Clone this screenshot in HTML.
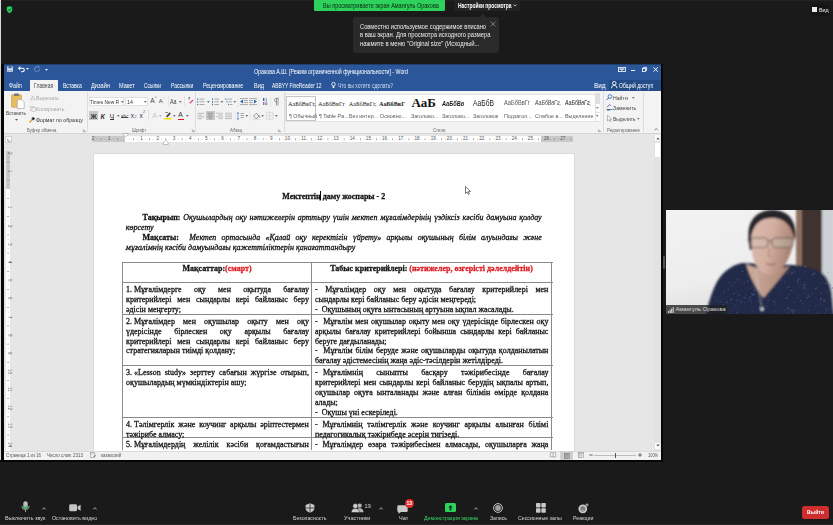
<!DOCTYPE html>
<html><head><meta charset="utf-8">
<style>
*{margin:0;padding:0;box-sizing:border-box}
html,body{width:833px;height:525px;overflow:hidden;background:#1a1a1a;font-family:"Liberation Sans",sans-serif}
.a{position:absolute}
.t{position:absolute;white-space:nowrap;line-height:1}
.sx{transform-origin:0 0}
svg{position:absolute;overflow:visible}
/* zoom top */
.tab{position:absolute;top:82.6px;font-size:6.3px;color:#fff;white-space:nowrap;line-height:1;transform-origin:0 0}
.rb{position:absolute;white-space:nowrap;line-height:1;font-size:5.9px;color:#444;transform-origin:0 0}
.gl{position:absolute;white-space:nowrap;line-height:1;font-size:5.4px;color:#666;transform-origin:0 0}
.sep{position:absolute;width:1px;background:#dcdcdc}
.doc{position:absolute;font-family:"Liberation Serif",serif;font-size:8.0px;line-height:9.9px;height:9.9px;color:#141414;white-space:nowrap;-webkit-text-stroke-width:0.28px;transform:scaleY(1.12);transform-origin:0 7.5px}
.j{text-align:justify;text-align-last:justify}
.c1{left:126px;width:182.9px}
.c2{left:315px;width:233.4px}
.hl{position:absolute;height:1px;background:#8a8a8a}
.vl{position:absolute;width:1px;background:#8a8a8a}
.red{color:#dc1f26}
.tb{position:absolute;white-space:nowrap;line-height:1;font-size:5.8px;color:#d8d8d8;transform-origin:0 0}
</style></head><body>
<!-- zoom top area -->
<div class="a" style="left:0;top:0;width:833px;height:1px;background:#222"></div>
<div class="a" style="left:0;top:0;width:1px;height:460px;background:#d8d8d8"></div>
<svg style="left:5.4px;top:5px" width="9" height="9" viewBox="0 0 9 9"><path d="M4.5 0.8 L7.6 2.1 L7.6 4.6 C7.6 6.5 6.2 7.7 4.5 8.4 C2.8 7.7 1.4 6.5 1.4 4.6 L1.4 2.1 Z" fill="#2fd15d" stroke="#0b0b14" stroke-width="0.6"/><path d="M3.2 4.7 L4.3 5.6 L6 3.6" stroke="#0d3a18" stroke-width="0.9" fill="none"/></svg>

<div class="a" style="left:314px;top:0;width:131px;height:11px;background:#2fd15d;border-radius:0 0 1.5px 1.5px"></div>
<div class="t sx" style="left:323px;top:2.8px;font-size:6.3px;color:#082811;transform:scaleX(0.874)">Вы просматриваете экран Амангуль Оракова</div>
<div class="a" style="left:454px;top:0;width:66px;height:10.5px;background:#232323;border-radius:0 0 2px 2px"></div>
<div class="t sx" style="left:457.6px;top:2.8px;font-size:6.3px;color:#fff;font-weight:bold;transform:scaleX(0.78)">Настройки просмотра</div>
<svg style="left:513.2px;top:4.3px" width="4" height="3" viewBox="0 0 4 3"><path d="M0.5 0.6 L2 2 L3.5 0.6" stroke="#ddd" stroke-width="0.8" fill="none"/></svg>

<div class="a" style="left:353px;top:16.8px;width:146px;height:36px;background:#2a2a2b;border-radius:3px"></div>
<svg style="left:479px;top:13.5px" width="8" height="4" viewBox="0 0 8 4"><path d="M0 3.5 L4 0 L8 3.5 Z" fill="#2a2a2b"/></svg>
<div class="t sx" style="left:360px;top:23.9px;font-size:6.5px;color:#ececec;transform:scaleX(0.88)">Совместно используемое содержимое вписано</div>
<div class="t sx" style="left:360px;top:32.3px;font-size:6.5px;color:#ececec;transform:scaleX(0.9)">в ваш экран. Для просмотра исходного размера</div>
<div class="t sx" style="left:360px;top:40.8px;font-size:6.5px;color:#ececec;transform:scaleX(0.907)">нажмите в меню "Original size" (Исходный...</div>
<svg style="left:490px;top:20.5px" width="6" height="6" viewBox="0 0 6 6"><path d="M0.6 0.6 L5.4 5.4 M5.4 0.6 L0.6 5.4" stroke="#8d8d8d" stroke-width="0.8"/></svg>

<div class="a" style="left:810.5px;top:4.3px;width:19.5px;height:11.5px;background:#151515;border-radius:3px"></div>
<div class="a" style="left:812.3px;top:7px;width:4.6px;height:5.2px;background:#ececec"></div>
<div class="t sx" style="left:818.7px;top:6.6px;font-size:6px;color:#eee;transform:scaleX(0.9)">Вид</div>
<!-- word window -->
<div class="a" style="left:1px;top:64px;width:3px;height:396px;background:#060606"></div>
<div class="a" style="left:661px;top:64px;width:2px;height:398px;background:#060606"></div>
<div class="a" style="left:0;top:460px;width:663px;height:2px;background:#060606"></div>
<div class="a" style="left:4px;top:64px;width:657px;height:396px;background:#e6e6e6"></div>
<!-- title + tabs -->
<div class="a" style="left:4px;top:64px;width:657px;height:27px;background:#2b579a"></div>
<div class="a" style="left:4px;top:64px;width:657px;height:0.6px;background:#1f3f6e"></div>
<div class="a" style="left:609px;top:80px;width:52px;height:11px;background:#234b87"></div>
<!-- QAT -->
<svg style="left:7px;top:66px" width="6" height="6.2" viewBox="0 0 6 6.2"><path d="M0.3 0.3 H5.7 V5.9 H0.3 Z" fill="#fff"/><rect x="1.3" y="0.3" width="3.4" height="2.1" fill="#2b579a"/><rect x="1.5" y="3.8" width="3" height="2.1" fill="#2b579a"/><rect x="2.2" y="4.2" width="1.5" height="1.7" fill="#fff"/></svg>
<svg style="left:18px;top:66.4px" width="7" height="6" viewBox="0 0 7 6"><path d="M1.2 2.2 H4.3 C5.6 2.2 6.3 3.1 6.3 4 C6.3 5 5.6 5.7 4.3 5.7 H3" stroke="#fff" stroke-width="1.1" fill="none"/><path d="M0 2.2 L2.2 0 L2.2 4.4 Z" fill="#fff"/></svg>
<svg style="left:25.8px;top:68.4px" width="3" height="2" viewBox="0 0 3 2"><path d="M0 0 H3 L1.5 1.8 Z" fill="#fff"/></svg>
<svg style="left:33.5px;top:66.4px" width="6" height="6" viewBox="0 0 6 6"><path d="M4.6 1.3 A2.5 2.5 0 1 0 5.5 3.3" stroke="#7b98c4" stroke-width="0.9" fill="none"/><path d="M3.5 0.2 L5.6 0.4 L5 2.4 Z" fill="#7b98c4"/></svg>
<svg style="left:44.5px;top:68.6px" width="3" height="2" viewBox="0 0 3 2"><path d="M0 0 H3 L1.5 1.8 Z" fill="#fff"/></svg>
<div class="t sx" style="left:254.4px;top:69.4px;font-size:6.4px;color:#fff;transform:scaleX(0.82)">Оракова А.Ш. [Режим ограниченной функциональности] - Word</div>
<!-- window controls -->
<svg style="left:618px;top:67px" width="8" height="5" viewBox="0 0 8 5"><rect x="0.4" y="0.4" width="7" height="4.2" fill="none" stroke="#fff" stroke-width="0.8"/><rect x="1.5" y="1.5" width="4.8" height="1.2" fill="#fff"/><path d="M3.9 2.7 L3.9 4" stroke="#fff" stroke-width="0.8"/></svg>
<div class="a" style="left:630.7px;top:70.2px;width:4.5px;height:0.9px;background:#fff"></div>
<svg style="left:641.8px;top:66.5px" width="5" height="5" viewBox="0 0 5 5"><rect x="0.4" y="1.5" width="3.1" height="3.1" fill="none" stroke="#fff" stroke-width="0.8"/><path d="M1.5 1.5 V0.4 H4.6 V3.5 H3.5" fill="none" stroke="#fff" stroke-width="0.8"/></svg>
<svg style="left:652.8px;top:67px" width="5.3" height="5" viewBox="0 0 5.3 5"><path d="M0.4 0.3 L4.9 4.7 M4.9 0.3 L0.4 4.7" stroke="#fff" stroke-width="0.95"/></svg>
<!-- tabs -->
<div class="a" style="left:29.8px;top:79.6px;width:28.7px;height:12px;background:#f3f3f3"></div>
<div class="tab" style="left:9.4px;transform:scaleX(0.83)">Файл</div>
<div class="tab" style="left:34.2px;color:#4a4a4a;transform:scaleX(0.8)">Главная</div>
<div class="tab" style="left:63px;transform:scaleX(0.8)">Вставка</div>
<div class="tab" style="left:91.2px;transform:scaleX(0.9)">Дизайн</div>
<div class="tab" style="left:118.8px;transform:scaleX(0.88)">Макет</div>
<div class="tab" style="left:143.6px;transform:scaleX(0.77)">Ссылки</div>
<div class="tab" style="left:171px;transform:scaleX(0.79)">Рассылки</div>
<div class="tab" style="left:203.2px;transform:scaleX(0.824)">Рецензирование</div>
<div class="tab" style="left:253.6px;transform:scaleX(0.88)">Вид</div>
<div class="tab" style="left:272.4px;transform:scaleX(0.77)">ABBYY FineReader 12</div>
<svg style="left:331px;top:82.3px" width="5" height="6.5" viewBox="0 0 5 6.5"><circle cx="2.5" cy="2.2" r="1.8" fill="none" stroke="#fff" stroke-width="0.8"/><rect x="1.7" y="4.2" width="1.6" height="1.9" fill="#fff"/></svg>
<div class="tab" style="left:338.3px;color:#cfdbee;transform:scaleX(0.792)">Что вы хотите сделать?</div>
<div class="tab" style="left:594px;transform:scaleX(1.0)">Вид</div>
<svg style="left:610.6px;top:81.4px" width="6.5" height="7.5" viewBox="0 0 6.5 7.5"><circle cx="3.25" cy="2.3" r="1.8" fill="none" stroke="#fff" stroke-width="0.9"/><path d="M0.5 7.2 C0.7 5.3 1.8 4.3 3.25 4.3 C4.7 4.3 5.8 5.3 6 7.2" fill="none" stroke="#fff" stroke-width="0.9"/></svg>
<div class="tab" style="left:618.7px;transform:scaleX(0.807)">Общий доступ</div>
<!-- ribbon bg -->
<div class="a" style="left:4px;top:91px;width:657px;height:42px;background:#f3f3f3"></div>
<div class="a" style="left:4px;top:132.5px;width:657px;height:1px;background:#d4d4d4"></div>
<!-- ribbon: clipboard -->
<svg style="left:10.5px;top:93px" width="14" height="16" viewBox="0 0 14 16"><rect x="0.5" y="1.8" width="10" height="12.5" rx="0.8" fill="#e8bd5c" stroke="#b88d32" stroke-width="0.5"/><rect x="3" y="0.4" width="5" height="2.6" rx="0.6" fill="#7a7a7a"/><path d="M6.3 6.6 H10.8 L13.2 9 V15.5 H6.3 Z" fill="#fff" stroke="#8d8d8d" stroke-width="0.5"/></svg>
<div class="rb sx" style="left:6px;top:111px;transform:scaleX(0.8)">Вставить</div>
<svg style="left:14.8px;top:119.2px" width="3" height="2" viewBox="0 0 3 2"><path d="M0 0 H3 L1.5 1.8 Z" fill="#555"/></svg>
<svg style="left:29.5px;top:95px" width="5.5" height="5.5" viewBox="0 0 5.5 5.5"><path d="M1 0.3 L4.2 3.8 M4.5 0.3 L1.3 3.8" stroke="#b0b0b0" stroke-width="0.6"/><circle cx="1.2" cy="4.4" r="0.9" fill="none" stroke="#b0b0b0" stroke-width="0.5"/><circle cx="4.3" cy="4.4" r="0.9" fill="none" stroke="#b0b0b0" stroke-width="0.5"/></svg>
<div class="rb sx" style="left:36px;top:95px;color:#a8a8a8;font-size:6.1px;transform:scaleX(0.85)">Вырезать</div>
<svg style="left:29.5px;top:105.6px" width="6" height="6" viewBox="0 0 6 6"><rect x="0.3" y="0.3" width="3.6" height="4.2" fill="none" stroke="#b0b0b0" stroke-width="0.5"/><rect x="2" y="1.5" width="3.6" height="4.2" fill="#f3f3f3" stroke="#b0b0b0" stroke-width="0.5"/></svg>
<div class="rb sx" style="left:36px;top:106px;color:#a8a8a8;font-size:6.1px;transform:scaleX(0.87)">Копировать</div>
<svg style="left:29px;top:116.5px" width="6" height="6" viewBox="0 0 6 6"><path d="M0.5 5.5 L3 2.8" stroke="#e59a2b" stroke-width="1.3"/><rect x="2.8" y="0.4" width="2.8" height="2.6" transform="rotate(45 4.2 1.7)" fill="#333"/></svg>
<div class="rb sx" style="left:36px;top:117px;color:#333;font-size:6.1px;transform:scaleX(0.86)">Формат по образцу</div>
<div class="gl sx" style="left:27px;top:127.6px;transform:scaleX(0.8)">Буфер обмена</div>
<svg style="left:82.5px;top:128.8px" width="3" height="3" viewBox="0 0 3 3"><path d="M0.3 0.3 V2.7 H2.7 M0.9 0.9 L2.7 2.7" stroke="#777" stroke-width="0.5" fill="none"/></svg>
<div class="sep" style="left:87px;top:92px;height:40px"></div>

<!-- font group -->
<div class="a" style="left:89.3px;top:96.9px;width:35px;height:9.1px;background:#fff;border:0.5px solid #e0e0e0"></div>
<div class="rb sx" style="left:90.3px;top:98.5px;color:#333;font-size:6.1px;transform:scaleX(0.8)">Times New R</div>
<svg style="left:120.5px;top:100.8px" width="2.6" height="2" viewBox="0 0 3 2"><path d="M0 0 H3 L1.5 1.8 Z" fill="#444"/></svg>
<div class="a" style="left:125.3px;top:96.9px;width:22.4px;height:9.1px;background:#fff;border:0.5px solid #e0e0e0"></div>
<div class="rb sx" style="left:126.5px;top:98.5px;color:#333;font-size:6.1px;transform:scaleX(0.85)">14</div>
<svg style="left:144px;top:100.8px" width="2.6" height="2" viewBox="0 0 3 2"><path d="M0 0 H3 L1.5 1.8 Z" fill="#444"/></svg>
<div class="rb" style="left:150.2px;top:98.3px;font-size:6.5px;color:#444">A</div>
<div class="rb" style="left:154.8px;top:96px;font-size:4px;color:#2a63b6">^</div>
<div class="rb" style="left:158.8px;top:99px;font-size:5.8px;color:#444">A</div>
<div class="rb" style="left:163px;top:96.5px;font-size:4px;color:#2a63b6">ˇ</div>
<div class="sep" style="left:168px;top:95px;height:11px;background:#e2e2e2"></div>
<div class="rb sx" style="left:170.4px;top:98.5px;font-size:6.3px;color:#444;transform:scaleX(0.85)">Aa</div>
<svg style="left:178.5px;top:100.8px" width="2.6" height="2" viewBox="0 0 3 2"><path d="M0 0 H3 L1.5 1.8 Z" fill="#444"/></svg>
<div class="sep" style="left:184px;top:95px;height:11px;background:#e2e2e2"></div>
<svg style="left:187px;top:96.8px" width="7" height="7" viewBox="0 0 7 7"><path d="M1 1 L3 0.3 L1.8 3" stroke="#555" stroke-width="0.6" fill="none"/><path d="M2.2 5.8 L5.6 2.4 L6.6 3.4 L3.2 6.8 Z" fill="#e8558a"/></svg>
<!-- row 2 -->
<div class="a" style="left:89.3px;top:111px;width:8.7px;height:9.4px;background:#c8c8c8"></div>
<div class="rb" style="left:90.5px;top:112.6px;font-size:7px;color:#333;font-weight:bold">Ж</div>
<div class="rb" style="left:100.5px;top:112.6px;font-size:7px;color:#333;font-weight:bold;font-style:italic">К</div>
<div class="rb" style="left:109.6px;top:112.6px;font-size:7px;color:#333">Ч</div>
<div class="a" style="left:109.6px;top:119.3px;width:4.5px;height:0.6px;background:#333"></div>
<svg style="left:116.6px;top:115px" width="2.6" height="2" viewBox="0 0 3 2"><path d="M0 0 H3 L1.5 1.8 Z" fill="#444"/></svg>
<div class="rb sx" style="left:121.2px;top:114.2px;font-size:5.2px;color:#444;transform:scaleX(0.9)">abc</div>
<div class="a" style="left:121.2px;top:116.7px;width:7px;height:0.5px;background:#444"></div>
<div class="rb" style="left:130.8px;top:112.8px;font-size:6.5px;color:#333">x</div>
<div class="rb" style="left:134.5px;top:116px;font-size:3.6px;color:#2a63b6">2</div>
<div class="rb" style="left:139.4px;top:112.8px;font-size:6.5px;color:#333">x</div>
<div class="rb" style="left:143px;top:111.2px;font-size:3.6px;color:#2a63b6">2</div>
<div class="sep" style="left:148.4px;top:110px;height:11px;background:#e2e2e2"></div>
<div class="rb" style="left:152.3px;top:112px;font-size:7px;color:#c6c6c6">A</div>
<svg style="left:158.8px;top:115px" width="2.6" height="2" viewBox="0 0 3 2"><path d="M0 0 H3 L1.5 1.8 Z" fill="#999"/></svg>
<svg style="left:164.2px;top:111.3px" width="7.5" height="8.5" viewBox="0 0 7.5 8.5"><path d="M2 5.3 L5.5 1.2 L6.8 2.4 L3.3 6.4 Z" fill="#444"/><path d="M1.3 1.5 L3.8 1.5" stroke="#444" stroke-width="0.7"/><rect x="0" y="6.9" width="7.5" height="1.6" fill="#f2e600"/></svg>
<svg style="left:173px;top:115px" width="2.6" height="2" viewBox="0 0 3 2"><path d="M0 0 H3 L1.5 1.8 Z" fill="#444"/></svg>
<div class="rb" style="left:178.3px;top:111.8px;font-size:6.8px;color:#333">A</div>
<div class="a" style="left:177.6px;top:118.6px;width:6.6px;height:1.5px;background:#e11b1b"></div>
<svg style="left:186.3px;top:115px" width="2.6" height="2" viewBox="0 0 3 2"><path d="M0 0 H3 L1.5 1.8 Z" fill="#444"/></svg>
<div class="gl sx" style="left:131.5px;top:127.6px;transform:scaleX(0.8)">Шрифт</div>
<svg style="left:191.5px;top:128.8px" width="3" height="3" viewBox="0 0 3 3"><path d="M0.3 0.3 V2.7 H2.7 M0.9 0.9 L2.7 2.7" stroke="#777" stroke-width="0.5" fill="none"/></svg>
<div class="sep" style="left:195.2px;top:92px;height:40px"></div>

<!-- paragraph group -->
<svg style="left:197px;top:97.5px" width="90" height="8" viewBox="0 0 90 8">
 <g fill="#4a7fc1"><rect x="0" y="0.5" width="1.3" height="1.3"/><rect x="0" y="3.2" width="1.3" height="1.3"/><rect x="0" y="5.9" width="1.3" height="1.3"/></g>
 <g stroke="#777" stroke-width="0.6"><path d="M2.5 1.1 H7.5 M2.5 3.8 H7.5 M2.5 6.5 H7.5"/></g>
 <path d="M10 3.3 H12.6 L11.3 4.8 Z" fill="#444"/>
 <g fill="#4a7fc1"><rect x="15" y="0.3" width="1" height="1.8"/><rect x="15" y="3" width="1" height="1.8"/><rect x="15" y="5.7" width="1" height="1.8"/></g>
 <g stroke="#777" stroke-width="0.6"><path d="M17.3 1.1 H22 M17.3 3.8 H22 M17.3 6.5 H22"/></g>
 <path d="M23.6 3.3 H26.2 L24.9 4.8 Z" fill="#444"/>
 <g fill="#4a7fc1"><rect x="28" y="0.5" width="1.2" height="1.2"/><rect x="29.5" y="3.2" width="1.2" height="1.2"/><rect x="31" y="5.9" width="1.2" height="1.2"/></g>
 <g stroke="#777" stroke-width="0.6"><path d="M30 1.1 H35 M31.5 3.8 H35 M33 6.5 H35.5"/></g>
 <path d="M36.5 3.3 H39.1 L37.8 4.8 Z" fill="#444"/>
 <path d="M41 -1 V9" stroke="#e2e2e2" stroke-width="0.8"/>
 <g stroke="#777" stroke-width="0.6"><path d="M43 0.6 H51 M47 2.6 H51 M47 4.6 H51 M43 6.6 H51"/></g>
 <path d="M46 1.6 L43 3.6 L46 5.6 Z" fill="#2a63b6"/>
 <g stroke="#777" stroke-width="0.6"><path d="M52 0.6 H60 M52 2.6 H56 M52 4.6 H56 M52 6.6 H60"/></g>
 <path d="M57 1.6 L60 3.6 L57 5.6 Z" fill="#2a63b6"/>
 <path d="M62 -1 V9" stroke="#e2e2e2" stroke-width="0.8"/>
 <rect x="66" y="0" width="1.4" height="3" fill="#2a63b6"/><rect x="66" y="4" width="1.4" height="3" fill="#9a5cc6"/><path d="M69.3 0 V6.5 M68.2 5.4 L69.3 7 L70.4 5.4" stroke="#555" stroke-width="0.6" fill="none"/>
 <path d="M73.5 -1 V9" stroke="#e2e2e2" stroke-width="0.8"/>
 <path d="M79.5 0.3 V7.5 M81 0.3 V7.5 M82 0.3 H79 A1.9 1.9 0 0 0 79 4 H79.5" stroke="#666" stroke-width="0.6" fill="none"/>
</svg>
<div class="a" style="left:206.2px;top:110.8px;width:8.4px;height:9.6px;background:#c8c8c8"></div>
<svg style="left:197px;top:112px" width="90" height="8" viewBox="0 0 90 8">
 <g stroke="#8a8a8a" stroke-width="0.5"><path d="M0.5 1.2 H7.5 M0.5 3 H5.5 M0.5 4.8 H7.5 M0.5 6.6 H5"/></g>
 <g stroke="#666" stroke-width="0.5"><path d="M10.3 1.2 H16.3 M11.3 3 H15.3 M10.3 4.8 H16.3 M11.8 6.6 H14.8"/></g>
 <g stroke="#8a8a8a" stroke-width="0.5"><path d="M19 1.2 H26 M21 3 H26 M19 4.8 H26 M21.5 6.6 H26"/></g>
 <g stroke="#8a8a8a" stroke-width="0.5"><path d="M28 1.2 H35 M28 3 H35 M28 4.8 H35 M28 6.6 H35"/></g>
 <path d="M38 -1 V9" stroke="#e2e2e2" stroke-width="0.8"/>
 <path d="M41 0 L42.2 1.4 H39.8 Z M41 8 L42.2 6.6 H39.8 Z" fill="#2a63b6"/><path d="M41 1.4 V6.6" stroke="#2a63b6" stroke-width="0.5"/>
 <g stroke="#777" stroke-width="0.6"><path d="M43.5 1.5 H47 M43.5 3.5 H47 M43.5 5.5 H47"/></g>
 <path d="M48.5 3.3 H51.1 L49.8 4.8 Z" fill="#444"/>
 <path d="M53 -1 V9" stroke="#e2e2e2" stroke-width="0.8"/>
 <path d="M56.5 4 L59.2 1.3 L62 4 L59.2 6.8 Z" fill="none" stroke="#555" stroke-width="0.6"/><path d="M62.2 3.6 C62.8 4.5 63 5.2 62.4 5.6" stroke="#2a63b6" stroke-width="0.8" fill="none"/><rect x="55.5" y="7" width="7" height="1" fill="#ddd"/>
 <path d="M64.3 3.3 H66.9 L65.6 4.8 Z" fill="#444"/>
 <rect x="69.5" y="0.3" width="6.5" height="7" fill="none" stroke="#aaa" stroke-width="0.5" stroke-dasharray="0.8 0.6"/><path d="M72.75 0.3 V7.3 M69.5 3.8 H76" stroke="#aaa" stroke-width="0.5" stroke-dasharray="0.8 0.6"/>
 <path d="M78 3.3 H80.6 L79.3 4.8 Z" fill="#444"/>
</svg>
<div class="gl sx" style="left:230.2px;top:127.6px;transform:scaleX(0.8)">Абзац</div>
<svg style="left:278.3px;top:128.8px" width="3" height="3" viewBox="0 0 3 3"><path d="M0.3 0.3 V2.7 H2.7 M0.9 0.9 L2.7 2.7" stroke="#777" stroke-width="0.5" fill="none"/></svg>
<div class="sep" style="left:284.2px;top:92px;height:40px"></div>

<!-- styles gallery -->
<div class="a" style="left:284.6px;top:94.2px;width:315.4px;height:27.8px;background:#fff;border:0.5px solid #e3e3e3"></div>
<div class="a" style="left:286.3px;top:95.8px;width:29.4px;height:25.4px;border:1px solid #c6c6c6;background:#fff"></div>
<div class="doc" style="left:288px;top:100.1px;font-size:6.2px;line-height:8px;height:8px;-webkit-text-stroke-width:0;transform:none;color:#222">АаБбВвГг,</div>
<div class="doc" style="left:318px;top:100.1px;font-size:6.2px;line-height:8px;height:8px;-webkit-text-stroke-width:0;transform:none;color:#222">АаБбВвГг</div>
<div class="doc" style="left:348.8px;top:100.1px;font-size:6.2px;line-height:8px;height:8px;-webkit-text-stroke-width:0;transform:none;color:#222">АаБбВвГг,</div>
<div class="doc" style="left:379px;top:100.1px;font-size:6.2px;line-height:8px;height:8px;-webkit-text-stroke-width:0;transform:none;color:#222;font-weight:bold">АаБбВвГ</div>
<div class="doc" style="left:411.5px;top:95.5px;font-size:13px;line-height:14px;height:14px;-webkit-text-stroke-width:0;transform:none;color:#111;font-weight:bold">АаБ</div>
<div class="rb sx" style="left:441.6px;top:100.2px;font-size:7px;color:#1a1a1a;font-style:italic;font-weight:bold;transform:scaleX(0.8)">АаБбВв</div>
<div class="rb sx" style="left:473px;top:99.2px;font-size:8.4px;color:#1a1a1a;transform:scaleX(0.8)">АаБбВ</div>
<div class="rb sx" style="left:503.8px;top:100.2px;font-size:6.6px;color:#555;transform:scaleX(0.86)">АаБбВвГг</div>
<div class="rb sx" style="left:534.9px;top:100.2px;font-size:6.6px;color:#444;font-style:italic;transform:scaleX(0.8)">АаБбВвГг,</div>
<div class="rb sx" style="left:565.1px;top:100.2px;font-size:6.6px;color:#222;font-style:italic;transform:scaleX(0.8)">АаБбВвГг,</div>
<div class="rb sx" style="left:288.5px;top:112.9px;font-size:6.1px;color:#5a5a5a;transform:scaleX(0.88)">¶ Обычный</div>
<div class="rb sx" style="left:318.5px;top:112.9px;font-size:6.1px;color:#5a5a5a;transform:scaleX(0.88)">¶ Table Pa...</div>
<div class="rb sx" style="left:349px;top:112.9px;font-size:6.1px;color:#5a5a5a;transform:scaleX(0.88)">Без интер...</div>
<div class="rb sx" style="left:380.2px;top:112.9px;font-size:6.1px;color:#5a5a5a;transform:scaleX(0.88)">Основно...</div>
<div class="rb sx" style="left:410.8px;top:112.9px;font-size:6.1px;color:#5a5a5a;transform:scaleX(0.88)">Заголово...</div>
<div class="rb sx" style="left:441.5px;top:112.9px;font-size:6.1px;color:#5a5a5a;transform:scaleX(0.88)">Заголово...</div>
<div class="rb sx" style="left:473px;top:112.9px;font-size:6.1px;color:#5a5a5a;transform:scaleX(0.88)">Заголовок</div>
<div class="rb sx" style="left:503.5px;top:112.9px;font-size:6.1px;color:#5a5a5a;transform:scaleX(0.88)">Подзагол...</div>
<div class="rb sx" style="left:534.5px;top:112.9px;font-size:6.1px;color:#5a5a5a;transform:scaleX(0.88)">Слабое в...</div>
<div class="rb sx" style="left:565px;top:112.9px;font-size:6.1px;color:#5a5a5a;transform:scaleX(0.88)">Выделение</div>
<div class="a" style="left:595px;top:93.4px;width:5px;height:28px;background:#fff;border-left:0.5px solid #e3e3e3"></div>
<div class="a" style="left:595px;top:93.4px;width:5px;height:10px;background:#dedede"></div>
<div class="a" style="left:595px;top:103.3px;width:5px;height:0.5px;background:#e3e3e3"></div>
<div class="a" style="left:595px;top:111.5px;width:5px;height:0.5px;background:#e3e3e3"></div>
<svg style="left:596.2px;top:106.5px" width="2.6" height="2" viewBox="0 0 3 2"><path d="M0 0 H3 L1.5 1.8 Z" fill="#555"/></svg>
<svg style="left:596.2px;top:115px" width="2.6" height="2" viewBox="0 0 3 2"><path d="M0 0 H3 L1.5 1.8 Z" fill="#555"/></svg>
<div class="gl sx" style="left:433.2px;top:127.6px;transform:scaleX(0.8)">Стили</div>
<svg style="left:598px;top:128.8px" width="3" height="3" viewBox="0 0 3 3"><path d="M0.3 0.3 V2.7 H2.7 M0.9 0.9 L2.7 2.7" stroke="#777" stroke-width="0.5" fill="none"/></svg>
<div class="sep" style="left:603.3px;top:92px;height:40px"></div>

<!-- editing -->
<svg style="left:605.5px;top:94px" width="6.5" height="6.5" viewBox="0 0 6.5 6.5"><circle cx="4" cy="2.5" r="1.9" fill="none" stroke="#2a63b6" stroke-width="0.8"/><path d="M2.7 3.8 L0.5 6" stroke="#2a63b6" stroke-width="1"/></svg>
<div class="rb sx" style="left:613.3px;top:94.8px;color:#444;font-size:6.1px;transform:scaleX(0.85)">Найти</div>
<svg style="left:631.5px;top:96.5px" width="2.6" height="2" viewBox="0 0 3 2"><path d="M0 0 H3 L1.5 1.8 Z" fill="#555"/></svg>
<svg style="left:605.5px;top:104.3px" width="7" height="6.5" viewBox="0 0 7 6.5"><path d="M1 3.5 L3.5 0.5 L5 2" stroke="#8e6cc1" stroke-width="1" fill="none"/><path d="M0.5 5.5 H6.5" stroke="#2a63b6" stroke-width="0.8"/><text x="1" y="6.5" font-size="3" fill="#333">ac</text></svg>
<div class="rb sx" style="left:613.3px;top:105.2px;color:#444;font-size:6.1px;transform:scaleX(0.85)">Заменить</div>
<svg style="left:606.5px;top:114.5px" width="5" height="7" viewBox="0 0 5 7"><path d="M0.5 0.5 V6 L2 4.7 L3.2 6.6 L4 6.2 L2.9 4.3 L4.6 4.2 Z" fill="#fff" stroke="#666" stroke-width="0.45"/></svg>
<div class="rb sx" style="left:613.3px;top:115.7px;color:#444;font-size:6.1px;transform:scaleX(0.8)">Выделить</div>
<svg style="left:636.5px;top:117.5px" width="2.6" height="2" viewBox="0 0 3 2"><path d="M0 0 H3 L1.5 1.8 Z" fill="#555"/></svg>
<div class="gl sx" style="left:606.5px;top:127.6px;transform:scaleX(0.8)">Редактирование</div>
<div class="sep" style="left:643px;top:92px;height:40px"></div>
<svg style="left:653.8px;top:128.3px" width="4.5" height="2.8" viewBox="0 0 4.5 2.8"><path d="M0.4 2.4 L2.25 0.5 L4.1 2.4" stroke="#555" stroke-width="0.7" fill="none"/></svg>
<div class="a" style="left:4.8px;top:135.7px;width:7.2px;height:7.2px;background:#fff;border:0.5px solid #d0d0d0"></div>
<svg style="left:6.5px;top:137.5px" width="4" height="4" viewBox="0 0 4 4"><path d="M0.8 0.5 V3.2 H3.5" stroke="#555" stroke-width="0.6" fill="none"/></svg>
<div class="a" style="left:92px;top:136.4px;width:481.4px;height:5.5px;background:#c9c9c9"></div>
<div class="a" style="left:125.4px;top:136.4px;width:415.6px;height:5.5px;background:#fff"></div>
<svg style="left:0;top:0" width="833" height="525"><rect x="96.75" y="138.9" width="0.6" height="0.6" fill="#8a8a8a"/><rect x="100.80" y="138.2" width="0.6" height="2" fill="#7a7a7a"/><rect x="104.85" y="138.9" width="0.6" height="0.6" fill="#8a8a8a"/><rect x="112.95" y="138.9" width="0.6" height="0.6" fill="#8a8a8a"/><rect x="117.00" y="138.2" width="0.6" height="2" fill="#7a7a7a"/><rect x="121.05" y="138.9" width="0.6" height="0.6" fill="#8a8a8a"/><rect x="129.15" y="138.9" width="0.6" height="0.6" fill="#8a8a8a"/><rect x="133.20" y="138.2" width="0.6" height="2" fill="#7a7a7a"/><rect x="137.25" y="138.9" width="0.6" height="0.6" fill="#8a8a8a"/><rect x="145.35" y="138.9" width="0.6" height="0.6" fill="#8a8a8a"/><rect x="149.40" y="138.2" width="0.6" height="2" fill="#7a7a7a"/><rect x="153.45" y="138.9" width="0.6" height="0.6" fill="#8a8a8a"/><rect x="161.55" y="138.9" width="0.6" height="0.6" fill="#8a8a8a"/><rect x="165.60" y="138.2" width="0.6" height="2" fill="#7a7a7a"/><rect x="169.65" y="138.9" width="0.6" height="0.6" fill="#8a8a8a"/><rect x="177.75" y="138.9" width="0.6" height="0.6" fill="#8a8a8a"/><rect x="181.80" y="138.2" width="0.6" height="2" fill="#7a7a7a"/><rect x="185.85" y="138.9" width="0.6" height="0.6" fill="#8a8a8a"/><rect x="193.95" y="138.9" width="0.6" height="0.6" fill="#8a8a8a"/><rect x="198.00" y="138.2" width="0.6" height="2" fill="#7a7a7a"/><rect x="202.05" y="138.9" width="0.6" height="0.6" fill="#8a8a8a"/><rect x="210.15" y="138.9" width="0.6" height="0.6" fill="#8a8a8a"/><rect x="214.20" y="138.2" width="0.6" height="2" fill="#7a7a7a"/><rect x="218.25" y="138.9" width="0.6" height="0.6" fill="#8a8a8a"/><rect x="226.35" y="138.9" width="0.6" height="0.6" fill="#8a8a8a"/><rect x="230.40" y="138.2" width="0.6" height="2" fill="#7a7a7a"/><rect x="234.45" y="138.9" width="0.6" height="0.6" fill="#8a8a8a"/><rect x="242.55" y="138.9" width="0.6" height="0.6" fill="#8a8a8a"/><rect x="246.60" y="138.2" width="0.6" height="2" fill="#7a7a7a"/><rect x="250.65" y="138.9" width="0.6" height="0.6" fill="#8a8a8a"/><rect x="258.75" y="138.9" width="0.6" height="0.6" fill="#8a8a8a"/><rect x="262.80" y="138.2" width="0.6" height="2" fill="#7a7a7a"/><rect x="266.85" y="138.9" width="0.6" height="0.6" fill="#8a8a8a"/><rect x="274.95" y="138.9" width="0.6" height="0.6" fill="#8a8a8a"/><rect x="279.00" y="138.2" width="0.6" height="2" fill="#7a7a7a"/><rect x="283.05" y="138.9" width="0.6" height="0.6" fill="#8a8a8a"/><rect x="291.15" y="138.9" width="0.6" height="0.6" fill="#8a8a8a"/><rect x="295.20" y="138.2" width="0.6" height="2" fill="#7a7a7a"/><rect x="299.25" y="138.9" width="0.6" height="0.6" fill="#8a8a8a"/><rect x="307.35" y="138.9" width="0.6" height="0.6" fill="#8a8a8a"/><rect x="311.40" y="138.2" width="0.6" height="2" fill="#7a7a7a"/><rect x="315.45" y="138.9" width="0.6" height="0.6" fill="#8a8a8a"/><rect x="323.55" y="138.9" width="0.6" height="0.6" fill="#8a8a8a"/><rect x="327.60" y="138.2" width="0.6" height="2" fill="#7a7a7a"/><rect x="331.65" y="138.9" width="0.6" height="0.6" fill="#8a8a8a"/><rect x="339.75" y="138.9" width="0.6" height="0.6" fill="#8a8a8a"/><rect x="343.80" y="138.2" width="0.6" height="2" fill="#7a7a7a"/><rect x="347.85" y="138.9" width="0.6" height="0.6" fill="#8a8a8a"/><rect x="355.95" y="138.9" width="0.6" height="0.6" fill="#8a8a8a"/><rect x="360.00" y="138.2" width="0.6" height="2" fill="#7a7a7a"/><rect x="364.05" y="138.9" width="0.6" height="0.6" fill="#8a8a8a"/><rect x="372.15" y="138.9" width="0.6" height="0.6" fill="#8a8a8a"/><rect x="376.20" y="138.2" width="0.6" height="2" fill="#7a7a7a"/><rect x="380.25" y="138.9" width="0.6" height="0.6" fill="#8a8a8a"/><rect x="388.35" y="138.9" width="0.6" height="0.6" fill="#8a8a8a"/><rect x="392.40" y="138.2" width="0.6" height="2" fill="#7a7a7a"/><rect x="396.45" y="138.9" width="0.6" height="0.6" fill="#8a8a8a"/><rect x="404.55" y="138.9" width="0.6" height="0.6" fill="#8a8a8a"/><rect x="408.60" y="138.2" width="0.6" height="2" fill="#7a7a7a"/><rect x="412.65" y="138.9" width="0.6" height="0.6" fill="#8a8a8a"/><rect x="420.75" y="138.9" width="0.6" height="0.6" fill="#8a8a8a"/><rect x="424.80" y="138.2" width="0.6" height="2" fill="#7a7a7a"/><rect x="428.85" y="138.9" width="0.6" height="0.6" fill="#8a8a8a"/><rect x="436.95" y="138.9" width="0.6" height="0.6" fill="#8a8a8a"/><rect x="441.00" y="138.2" width="0.6" height="2" fill="#7a7a7a"/><rect x="445.05" y="138.9" width="0.6" height="0.6" fill="#8a8a8a"/><rect x="453.15" y="138.9" width="0.6" height="0.6" fill="#8a8a8a"/><rect x="457.20" y="138.2" width="0.6" height="2" fill="#7a7a7a"/><rect x="461.25" y="138.9" width="0.6" height="0.6" fill="#8a8a8a"/><rect x="469.35" y="138.9" width="0.6" height="0.6" fill="#8a8a8a"/><rect x="473.40" y="138.2" width="0.6" height="2" fill="#7a7a7a"/><rect x="477.45" y="138.9" width="0.6" height="0.6" fill="#8a8a8a"/><rect x="485.55" y="138.9" width="0.6" height="0.6" fill="#8a8a8a"/><rect x="489.60" y="138.2" width="0.6" height="2" fill="#7a7a7a"/><rect x="493.65" y="138.9" width="0.6" height="0.6" fill="#8a8a8a"/><rect x="501.75" y="138.9" width="0.6" height="0.6" fill="#8a8a8a"/><rect x="505.80" y="138.2" width="0.6" height="2" fill="#7a7a7a"/><rect x="509.85" y="138.9" width="0.6" height="0.6" fill="#8a8a8a"/><rect x="517.95" y="138.9" width="0.6" height="0.6" fill="#8a8a8a"/><rect x="522.00" y="138.2" width="0.6" height="2" fill="#7a7a7a"/><rect x="526.05" y="138.9" width="0.6" height="0.6" fill="#8a8a8a"/><rect x="534.15" y="138.9" width="0.6" height="0.6" fill="#8a8a8a"/><rect x="538.20" y="138.2" width="0.6" height="2" fill="#7a7a7a"/><rect x="542.25" y="138.9" width="0.6" height="0.6" fill="#8a8a8a"/><rect x="550.35" y="138.9" width="0.6" height="0.6" fill="#8a8a8a"/><rect x="554.40" y="138.2" width="0.6" height="2" fill="#7a7a7a"/><rect x="558.45" y="138.9" width="0.6" height="0.6" fill="#8a8a8a"/><rect x="566.55" y="138.9" width="0.6" height="0.6" fill="#8a8a8a"/><rect x="570.60" y="138.2" width="0.6" height="2" fill="#7a7a7a"/></svg>
<div class="t" style="left:91.70px;top:137px;font-size:4.6px;color:#555;width:2.6px;text-align:center">2</div>
<div class="t" style="left:107.90px;top:137px;font-size:4.6px;color:#555;width:2.6px;text-align:center">1</div>
<div class="t" style="left:140.30px;top:137px;font-size:4.6px;color:#555;width:2.6px;text-align:center">1</div>
<div class="t" style="left:156.50px;top:137px;font-size:4.6px;color:#555;width:2.6px;text-align:center">2</div>
<div class="t" style="left:172.70px;top:137px;font-size:4.6px;color:#555;width:2.6px;text-align:center">3</div>
<div class="t" style="left:188.90px;top:137px;font-size:4.6px;color:#555;width:2.6px;text-align:center">4</div>
<div class="t" style="left:205.10px;top:137px;font-size:4.6px;color:#555;width:2.6px;text-align:center">5</div>
<div class="t" style="left:221.30px;top:137px;font-size:4.6px;color:#555;width:2.6px;text-align:center">6</div>
<div class="t" style="left:237.50px;top:137px;font-size:4.6px;color:#555;width:2.6px;text-align:center">7</div>
<div class="t" style="left:253.70px;top:137px;font-size:4.6px;color:#555;width:2.6px;text-align:center">8</div>
<div class="t" style="left:269.90px;top:137px;font-size:4.6px;color:#555;width:2.6px;text-align:center">9</div>
<div class="t" style="left:284.80px;top:137px;font-size:4.6px;color:#555;width:5.2px;text-align:center">10</div>
<div class="t" style="left:301.00px;top:137px;font-size:4.6px;color:#555;width:5.2px;text-align:center">11</div>
<div class="t" style="left:317.20px;top:137px;font-size:4.6px;color:#555;width:5.2px;text-align:center">12</div>
<div class="t" style="left:333.40px;top:137px;font-size:4.6px;color:#555;width:5.2px;text-align:center">13</div>
<div class="t" style="left:349.60px;top:137px;font-size:4.6px;color:#555;width:5.2px;text-align:center">14</div>
<div class="t" style="left:365.80px;top:137px;font-size:4.6px;color:#555;width:5.2px;text-align:center">15</div>
<div class="t" style="left:382.00px;top:137px;font-size:4.6px;color:#555;width:5.2px;text-align:center">16</div>
<div class="t" style="left:398.20px;top:137px;font-size:4.6px;color:#555;width:5.2px;text-align:center">17</div>
<div class="t" style="left:414.40px;top:137px;font-size:4.6px;color:#555;width:5.2px;text-align:center">18</div>
<div class="t" style="left:430.60px;top:137px;font-size:4.6px;color:#555;width:5.2px;text-align:center">19</div>
<div class="t" style="left:446.80px;top:137px;font-size:4.6px;color:#555;width:5.2px;text-align:center">20</div>
<div class="t" style="left:463.00px;top:137px;font-size:4.6px;color:#555;width:5.2px;text-align:center">21</div>
<div class="t" style="left:479.20px;top:137px;font-size:4.6px;color:#555;width:5.2px;text-align:center">22</div>
<div class="t" style="left:495.40px;top:137px;font-size:4.6px;color:#555;width:5.2px;text-align:center">23</div>
<div class="t" style="left:511.60px;top:137px;font-size:4.6px;color:#555;width:5.2px;text-align:center">24</div>
<div class="t" style="left:527.80px;top:137px;font-size:4.6px;color:#555;width:5.2px;text-align:center">25</div>
<div class="t" style="left:544.00px;top:137px;font-size:4.6px;color:#555;width:5.2px;text-align:center">26</div>
<div class="t" style="left:560.20px;top:137px;font-size:4.6px;color:#555;width:5.2px;text-align:center">27</div>
<svg style="left:122.8px;top:133.3px" width="5.5" height="4" viewBox="0 0 5.5 4"><path d="M0.4 0.4 H5.1 V1.8 L2.75 3.6 L0.4 1.8 Z" fill="#fff" stroke="#888" stroke-width="0.5"/></svg>
<svg style="left:163.4px;top:139.5px" width="5.5" height="5" viewBox="0 0 5.5 5"><path d="M2.75 0.4 L5.1 2.4 V4.6 H0.4 V2.4 Z" fill="#fff" stroke="#888" stroke-width="0.5"/></svg>
<div class="a" style="left:5.7px;top:151px;width:4.8px;height:300px;background:#fff"></div>
<div class="a" style="left:5.7px;top:151px;width:4.8px;height:38px;background:#c9c9c9"></div>
<svg style="left:0;top:0" width="833" height="525"><rect x="7.8" y="157.25" width="0.6" height="0.6" fill="#8a8a8a"/><rect x="7.1" y="161.80" width="2" height="0.6" fill="#7a7a7a"/><rect x="7.8" y="166.35" width="0.6" height="0.6" fill="#8a8a8a"/><rect x="7.8" y="175.45" width="0.6" height="0.6" fill="#8a8a8a"/><rect x="7.1" y="180.00" width="2" height="0.6" fill="#7a7a7a"/><rect x="7.8" y="184.55" width="0.6" height="0.6" fill="#8a8a8a"/><rect x="7.8" y="193.65" width="0.6" height="0.6" fill="#8a8a8a"/><rect x="7.1" y="198.20" width="2" height="0.6" fill="#7a7a7a"/><rect x="7.8" y="202.75" width="0.6" height="0.6" fill="#8a8a8a"/><rect x="7.8" y="211.85" width="0.6" height="0.6" fill="#8a8a8a"/><rect x="7.1" y="216.40" width="2" height="0.6" fill="#7a7a7a"/><rect x="7.8" y="220.95" width="0.6" height="0.6" fill="#8a8a8a"/><rect x="7.8" y="230.05" width="0.6" height="0.6" fill="#8a8a8a"/><rect x="7.1" y="234.60" width="2" height="0.6" fill="#7a7a7a"/><rect x="7.8" y="239.15" width="0.6" height="0.6" fill="#8a8a8a"/><rect x="7.8" y="248.25" width="0.6" height="0.6" fill="#8a8a8a"/><rect x="7.1" y="252.80" width="2" height="0.6" fill="#7a7a7a"/><rect x="7.8" y="257.35" width="0.6" height="0.6" fill="#8a8a8a"/><rect x="7.8" y="266.45" width="0.6" height="0.6" fill="#8a8a8a"/><rect x="7.1" y="271.00" width="2" height="0.6" fill="#7a7a7a"/><rect x="7.8" y="275.55" width="0.6" height="0.6" fill="#8a8a8a"/><rect x="7.8" y="284.65" width="0.6" height="0.6" fill="#8a8a8a"/><rect x="7.1" y="289.20" width="2" height="0.6" fill="#7a7a7a"/><rect x="7.8" y="293.75" width="0.6" height="0.6" fill="#8a8a8a"/><rect x="7.8" y="302.85" width="0.6" height="0.6" fill="#8a8a8a"/><rect x="7.1" y="307.40" width="2" height="0.6" fill="#7a7a7a"/><rect x="7.8" y="311.95" width="0.6" height="0.6" fill="#8a8a8a"/><rect x="7.8" y="321.05" width="0.6" height="0.6" fill="#8a8a8a"/><rect x="7.1" y="325.60" width="2" height="0.6" fill="#7a7a7a"/><rect x="7.8" y="330.15" width="0.6" height="0.6" fill="#8a8a8a"/><rect x="7.8" y="339.25" width="0.6" height="0.6" fill="#8a8a8a"/><rect x="7.1" y="343.80" width="2" height="0.6" fill="#7a7a7a"/><rect x="7.8" y="348.35" width="0.6" height="0.6" fill="#8a8a8a"/><rect x="7.8" y="357.45" width="0.6" height="0.6" fill="#8a8a8a"/><rect x="7.1" y="362.00" width="2" height="0.6" fill="#7a7a7a"/><rect x="7.8" y="366.55" width="0.6" height="0.6" fill="#8a8a8a"/><rect x="7.8" y="375.65" width="0.6" height="0.6" fill="#8a8a8a"/><rect x="7.1" y="380.20" width="2" height="0.6" fill="#7a7a7a"/><rect x="7.8" y="384.75" width="0.6" height="0.6" fill="#8a8a8a"/><rect x="7.8" y="393.85" width="0.6" height="0.6" fill="#8a8a8a"/><rect x="7.1" y="398.40" width="2" height="0.6" fill="#7a7a7a"/><rect x="7.8" y="402.95" width="0.6" height="0.6" fill="#8a8a8a"/><rect x="7.8" y="412.05" width="0.6" height="0.6" fill="#8a8a8a"/><rect x="7.1" y="416.60" width="2" height="0.6" fill="#7a7a7a"/><rect x="7.8" y="421.15" width="0.6" height="0.6" fill="#8a8a8a"/><rect x="7.8" y="430.25" width="0.6" height="0.6" fill="#8a8a8a"/><rect x="7.1" y="434.80" width="2" height="0.6" fill="#7a7a7a"/><rect x="7.8" y="439.35" width="0.6" height="0.6" fill="#8a8a8a"/><rect x="7.8" y="448.45" width="0.6" height="0.6" fill="#8a8a8a"/></svg>
<div class="t" style="left:5.80px;top:151.70px;width:4.6px;height:2.6px;font-size:4.6px;color:#555"><span style="position:absolute;left:0;top:0;transform:translate(4.6px,0) rotate(90deg);transform-origin:0 0;white-space:nowrap">2</span></div>
<div class="t" style="left:5.80px;top:169.90px;width:4.6px;height:2.6px;font-size:4.6px;color:#555"><span style="position:absolute;left:0;top:0;transform:translate(4.6px,0) rotate(90deg);transform-origin:0 0;white-space:nowrap">1</span></div>
<div class="t" style="left:5.80px;top:206.30px;width:4.6px;height:2.6px;font-size:4.6px;color:#555"><span style="position:absolute;left:0;top:0;transform:translate(4.6px,0) rotate(90deg);transform-origin:0 0;white-space:nowrap">1</span></div>
<div class="t" style="left:5.80px;top:224.50px;width:4.6px;height:2.6px;font-size:4.6px;color:#555"><span style="position:absolute;left:0;top:0;transform:translate(4.6px,0) rotate(90deg);transform-origin:0 0;white-space:nowrap">2</span></div>
<div class="t" style="left:5.80px;top:242.70px;width:4.6px;height:2.6px;font-size:4.6px;color:#555"><span style="position:absolute;left:0;top:0;transform:translate(4.6px,0) rotate(90deg);transform-origin:0 0;white-space:nowrap">3</span></div>
<div class="t" style="left:5.80px;top:260.90px;width:4.6px;height:2.6px;font-size:4.6px;color:#555"><span style="position:absolute;left:0;top:0;transform:translate(4.6px,0) rotate(90deg);transform-origin:0 0;white-space:nowrap">4</span></div>
<div class="t" style="left:5.80px;top:279.10px;width:4.6px;height:2.6px;font-size:4.6px;color:#555"><span style="position:absolute;left:0;top:0;transform:translate(4.6px,0) rotate(90deg);transform-origin:0 0;white-space:nowrap">5</span></div>
<div class="t" style="left:5.80px;top:297.30px;width:4.6px;height:2.6px;font-size:4.6px;color:#555"><span style="position:absolute;left:0;top:0;transform:translate(4.6px,0) rotate(90deg);transform-origin:0 0;white-space:nowrap">6</span></div>
<div class="t" style="left:5.80px;top:315.50px;width:4.6px;height:2.6px;font-size:4.6px;color:#555"><span style="position:absolute;left:0;top:0;transform:translate(4.6px,0) rotate(90deg);transform-origin:0 0;white-space:nowrap">7</span></div>
<div class="t" style="left:5.80px;top:333.70px;width:4.6px;height:2.6px;font-size:4.6px;color:#555"><span style="position:absolute;left:0;top:0;transform:translate(4.6px,0) rotate(90deg);transform-origin:0 0;white-space:nowrap">8</span></div>
<div class="t" style="left:5.80px;top:351.90px;width:4.6px;height:2.6px;font-size:4.6px;color:#555"><span style="position:absolute;left:0;top:0;transform:translate(4.6px,0) rotate(90deg);transform-origin:0 0;white-space:nowrap">9</span></div>
<div class="t" style="left:5.80px;top:368.80px;width:4.6px;height:5.2px;font-size:4.6px;color:#555"><span style="position:absolute;left:0;top:0;transform:translate(4.6px,0) rotate(90deg);transform-origin:0 0;white-space:nowrap">10</span></div>
<div class="t" style="left:5.80px;top:387.00px;width:4.6px;height:5.2px;font-size:4.6px;color:#555"><span style="position:absolute;left:0;top:0;transform:translate(4.6px,0) rotate(90deg);transform-origin:0 0;white-space:nowrap">11</span></div>
<div class="t" style="left:5.80px;top:405.20px;width:4.6px;height:5.2px;font-size:4.6px;color:#555"><span style="position:absolute;left:0;top:0;transform:translate(4.6px,0) rotate(90deg);transform-origin:0 0;white-space:nowrap">12</span></div>
<div class="t" style="left:5.80px;top:423.40px;width:4.6px;height:5.2px;font-size:4.6px;color:#555"><span style="position:absolute;left:0;top:0;transform:translate(4.6px,0) rotate(90deg);transform-origin:0 0;white-space:nowrap">13</span></div>
<div class="t" style="left:5.80px;top:441.60px;width:4.6px;height:5.2px;font-size:4.6px;color:#555"><span style="position:absolute;left:0;top:0;transform:translate(4.6px,0) rotate(90deg);transform-origin:0 0;white-space:nowrap">14</span></div>
<div class="a" style="left:93.5px;top:153.5px;width:480.5px;height:297.5px;background:#fff;box-shadow:0 0 0 0.6px #d2d2d2"></div>
<div class="doc" style="left:125.8px;width:415.9px;text-align:center;top:192.03px;font-weight:bold">Мектептің даму жоспары - 2</div>
<div class="a" style="left:320.4px;top:191.2px;width:0.8px;height:8.6px;background:#000"></div>
<div class="doc j" style="left:142.5px;width:399.2px;top:212.93px;"><b>Тақырып: </b><i>Оқушылардың оқу нәтижелерін арттыру үшін мектеп мұғалімдерінің үздіксіз кәсіби дамуына қолдау</i></div>
<div class="doc " style="left:125.8px;top:222.83px;"><i>көрсету</i></div>
<div class="doc j" style="left:142.5px;width:399.2px;top:233.03px;"><b>Мақсаты: </b>&nbsp;<i>Мектеп ортасында «Қалай оқу керектігін үйрету» арқылы оқушының білім алуындағы және</i></div>
<div class="doc " style="left:125.8px;top:242.73px;"><i>мұғалімнің кәсіби дамуындағы қажеттіліктерін қанағаттандыру</i></div>
<div class="hl" style="left:122.5px;width:430.0px;top:261.7px"></div>
<div class="hl" style="left:122.5px;width:430.0px;top:282.0px"></div>
<div class="hl" style="left:122.5px;width:430.0px;top:313.7px"></div>
<div class="hl" style="left:122.5px;width:430.0px;top:365.3px"></div>
<div class="hl" style="left:122.5px;width:430.0px;top:416.8px"></div>
<div class="hl" style="left:122.5px;width:430.0px;top:436.7px"></div>
<div class="vl" style="left:122.0px;top:261.7px;height:188.8px"></div>
<div class="vl" style="left:311.0px;top:261.7px;height:188.8px"></div>
<div class="vl" style="left:551.0px;top:261.7px;height:188.8px"></div>
<div class="doc" style="left:122.5px;width:189.0px;text-align:center;top:264.23px;font-weight:bold">Мақсаттар:<span class="red">(смарт)</span></div>
<div class="doc" style="left:311.5px;width:240.0px;text-align:center;top:264.23px;font-weight:bold">Табыс критерийлері: <span class="red">(нәтижелер, өзгерісті дәлелдейтін)</span></div>
<div class="doc c1 j" style="top:285.00px"><span style="display:inline-block">1. Мұғалімдерге</span> оқу мен оқытуда бағалау</div>
<div class="doc c1 j" style="top:294.90px">критерийлері мен сындарлы кері байланыс беру</div>
<div class="doc c1" style="top:304.80px">әдісін меңгерту;</div>
<div class="doc c2 j" style="top:285.00px">- Мұғалімдер оқу мен оқытуда бағалау критерийлері мен</div>
<div class="doc c2" style="top:294.90px">сындарлы кері байланыс беру әдісін меңгереді;</div>
<div class="doc c2" style="top:304.80px">-&nbsp; Оқушының оқуға ынтасының артуына ықпал жасалады.</div>
<div class="doc c1 j" style="top:316.70px"><span style="display:inline-block">2. Мұғалімдер</span> мен оқушылар оқыту мен оқу</div>
<div class="doc c1 j" style="top:326.60px">үдерісінде бірлескен оқу арқылы бағалау</div>
<div class="doc c1 j" style="top:336.50px">критерийлері мен сындарлы кері байланыс беру</div>
<div class="doc c1" style="top:346.40px">стратегияларын тиімді қолдану;</div>
<div class="doc c2 j" style="top:316.70px">-&nbsp; Мұғалім мен оқушылар оқыту мен оқу үдерісінде бірлескен оқу</div>
<div class="doc c2 j" style="top:326.60px">арқылы бағалау критерийлері бойынша сындарлы кері байланыс</div>
<div class="doc c2" style="top:336.50px">беруге дағдыланады;</div>
<div class="doc c2 j" style="top:346.40px">-&nbsp; Мұғалім білім беруде және оқушыларды оқытуда қолданылатын</div>
<div class="doc c2" style="top:356.30px">бағалау әдістемесінің жаңа әдіс-тәсілдерін жетілдіреді.</div>
<div class="doc c1 j" style="top:368.30px"><span style="display:inline-block">3. «Lesson</span> study» зерттеу сабағын жүргізе отырып,</div>
<div class="doc c1" style="top:378.20px">оқушылардың мүмкіндіктерін ашу;</div>
<div class="doc c2 j" style="top:368.30px"><span style="display:inline-block;width:7.9px">-</span>Мұғалімнің сыныпты басқару тәжірибесінде бағалау</div>
<div class="doc c2 j" style="top:378.20px">критерийлері мен сындарлы кері байланыс берудің ықпалы артып,</div>
<div class="doc c2 j" style="top:388.10px">оқушылар оқуға ынталанады және алған білімін өмірде қолдана</div>
<div class="doc c2" style="top:398.00px">алады;</div>
<div class="doc c2" style="top:407.90px">-&nbsp; Оқушы үні ескеріледі.</div>
<div class="doc c1 j" style="top:419.80px"><span style="display:inline-block">4. Тәлімгерлік</span> және коучинг арқылы әріптестермен</div>
<div class="doc c1" style="top:429.70px">тәжірибе алмасу;</div>
<div class="doc c2 j" style="top:419.80px">- Мұғалімнің тәлімгерлік және коучинг арқылы алынған білімі</div>
<div class="doc c2" style="top:429.70px">педагогикалық тәжірибеде әсерін тигізеді.</div>
<div class="doc c1 j" style="top:439.70px"><span style="display:inline-block">5. Мұғалімдердің</span> желілік кәсіби қоғамдастығын</div>
<div class="doc c2 j" style="top:439.70px">- Мұғалімдер өзара тәжірибесімен алмасады, оқушыларға жаңа</div>
<svg style="left:464.5px;top:185.5px" width="6" height="9" viewBox="0 0 6 9"><path d="M0.5 0.5 V7.5 L2.2 6 L3.4 8.5 L4.4 8 L3.3 5.6 L5.5 5.5 Z" fill="#fff" stroke="#222" stroke-width="0.6"/></svg>
<!-- scrollbar -->
<div class="a" style="left:654.3px;top:133.5px;width:6.5px;height:317px;background:#e2e2e2"></div>
<div class="a" style="left:654.8px;top:135.2px;width:5.7px;height:6.2px;background:#fff"></div>
<svg style="left:655.8px;top:137px" width="4" height="3" viewBox="0 0 4 3"><path d="M0.3 2.6 L2 0.4 L3.7 2.6 Z" fill="#555"/></svg>
<div class="a" style="left:654.8px;top:142.9px;width:5.7px;height:13.8px;background:#fff"></div>
<div class="a" style="left:654.8px;top:442.6px;width:5.7px;height:6.2px;background:#fff"></div>
<svg style="left:655.8px;top:444.4px" width="4" height="3" viewBox="0 0 4 3"><path d="M0.3 0.4 L2 2.6 L3.7 0.4 Z" fill="#555"/></svg>
<!-- status bar -->
<div class="a" style="left:4px;top:450.6px;width:657px;height:9.4px;background:#f1f1f1;border-top:0.5px solid #dadada"></div>
<div class="t sx" style="left:5.9px;top:452.9px;font-size:5.5px;color:#555;transform:scaleX(0.79)">Страница 1 из 16</div>
<div class="t sx" style="left:46.8px;top:452.9px;font-size:5.5px;color:#555;transform:scaleX(0.805)">Число слов: 2313</div>
<svg style="left:89.7px;top:452.2px" width="6" height="6" viewBox="0 0 6 6"><rect x="0.3" y="0.3" width="4" height="5" fill="#fff" stroke="#777" stroke-width="0.5"/><path d="M1 1.5 H3.5 M1 2.7 H3.5" stroke="#999" stroke-width="0.4"/><path d="M3.3 3.8 L4.4 5 L5.8 3" stroke="#555" stroke-width="0.6" fill="none"/></svg>
<div class="t sx" style="left:101.4px;top:452.9px;font-size:5.5px;color:#555;transform:scaleX(0.81)">казахский</div>
<svg style="left:549.5px;top:452.3px" width="6" height="5.5" viewBox="0 0 6 5.5"><path d="M0.3 0.8 C1.5 0.3 2.5 0.5 3 1 C3.5 0.5 4.5 0.3 5.7 0.8 V5 C4.5 4.6 3.5 4.7 3 5.2 C2.5 4.7 1.5 4.6 0.3 5 Z M3 1 V5.2" fill="none" stroke="#777" stroke-width="0.5"/></svg>
<div class="a" style="left:560.3px;top:451px;width:12.7px;height:9px;background:#cfcfcf"></div>
<svg style="left:564px;top:452.5px" width="5.5" height="6" viewBox="0 0 5.5 6"><rect x="0.3" y="0.3" width="4.9" height="5.4" fill="#bbb" stroke="#666" stroke-width="0.5"/><path d="M1.2 1.6 H4.3 M1.2 2.8 H4.3 M1.2 4 H4.3" stroke="#666" stroke-width="0.4"/></svg>
<svg style="left:578px;top:452.3px" width="6" height="6" viewBox="0 0 6 6"><rect x="0.3" y="0.3" width="5" height="5" fill="none" stroke="#777" stroke-width="0.5"/><path d="M0.3 1.6 H5.3 M1.2 2.8 H4 M1.2 4 H4" stroke="#777" stroke-width="0.4"/></svg>
<svg style="left:589px;top:453px" width="4" height="4" viewBox="0 0 4 4"><path d="M0.3 2 H3.7" stroke="#555" stroke-width="0.9"/></svg>
<div class="a" style="left:593.5px;top:455.3px;width:42px;height:0.5px;background:#bdbdbd"></div>
<div class="a" style="left:614.8px;top:452.8px;width:1.4px;height:5.2px;background:#555"></div>
<svg style="left:638px;top:453px" width="4" height="4" viewBox="0 0 4 4"><path d="M0.2 2 H3.8 M2 0.2 V3.8" stroke="#555" stroke-width="0.9"/></svg>
<div class="t sx" style="left:647.8px;top:452.9px;font-size:5.5px;color:#555;transform:scaleX(0.72)">100%</div>
<!-- video panel -->
<div class="a" style="left:663px;top:256px;width:1.6px;height:13px;background:#555;border-radius:1px"></div>
<svg style="left:666px;top:210px" width="167" height="104" viewBox="0 0 167 104">
 <defs>
  <linearGradient id="wall" x1="0" y1="0" x2="0.3" y2="1"><stop offset="0" stop-color="#f2f2f2"/><stop offset="0.7" stop-color="#ededed"/><stop offset="1" stop-color="#dedede"/></linearGradient>
  <linearGradient id="skin" x1="0" y1="0" x2="1" y2="0.3"><stop offset="0" stop-color="#dcbdb1"/><stop offset="0.55" stop-color="#d2ae9f"/><stop offset="1" stop-color="#a98273"/></linearGradient>
  <linearGradient id="neck" x1="0" y1="0" x2="1" y2="0"><stop offset="0" stop-color="#cfae9f"/><stop offset="1" stop-color="#a98475"/></linearGradient>
  <filter id="bl" x="-10%" y="-10%" width="120%" height="120%"><feGaussianBlur stdDeviation="0.8"/></filter>
  <filter id="bl2" x="-10%" y="-10%" width="120%" height="120%"><feGaussianBlur stdDeviation="0.35"/></filter>
  <clipPath id="vc"><rect x="0" y="0" width="167" height="104"/></clipPath>
 </defs>
 <g clip-path="url(#vc)">
 <rect x="0" y="0" width="167" height="104" fill="url(#wall)"/>
 <g filter="url(#bl)">
  <rect x="130" y="-2" width="5.5" height="70" fill="#8e6f60"/>
  <rect x="135.5" y="-2" width="20.5" height="108" fill="#3f312d"/>
  <rect x="156" y="-2" width="12" height="108" fill="#cdd0d4"/>
  <path d="M40 106 C42 94 46 80 52 70 C58 61 66 55 76 53 L128 55 C140 56 150 59 156 63 C162 68 165 76 166 86 L168 106 Z" fill="#212a48"/>
  <path d="M80 54 C85 70 91 80 97.5 88 C106 78 116 66 124 56 C112 60 92 60 80 54 Z" fill="url(#neck)"/>
  <path d="M85 26 C84.5 44 88 56 96 62 C100 65 106 66 110 64 C118 59 126 46 128 28 C127 14 118 5 106 5 C94 5 86 12 85 26 Z" fill="url(#skin)"/>
  <path d="M83 31 C80 14 88 0.5 106 0 C122 0 130 10 129.5 26 L128.5 31 C127 18 120 8 106 8 C93 8 86 16 85 30 Z" fill="#27262a"/>
  <path d="M82 28 L84 40 L86 40 L85.5 28 Z" fill="#2e2b2e"/>
  <rect x="84" y="28" width="18" height="9.5" rx="3.5" fill="#d6c3b5" fill-opacity="0.3" stroke="#4a4444" stroke-width="0.7"/>
  <rect x="106" y="28" width="21" height="9.5" rx="3.5" fill="#b9c0ae" fill-opacity="0.35" stroke="#4a4444" stroke-width="0.7"/>
  <path d="M102 31 L106 31" stroke="#4d4747" stroke-width="0.8"/>
  <path d="M100 53.5 C103 54.8 107 54.8 110 53.5" stroke="#8a5c55" stroke-width="1.2" fill="none"/>
  <path d="M103.5 38 L102 46 L106 47" stroke="#a98070" stroke-width="0.8" fill="none"/>
  <path d="M90 60 C92 76 94 90 96 97" stroke="#dcdcdc" stroke-width="0.5" fill="none"/>
  <circle cx="96" cy="99" r="1.7" fill="#ececec"/>
 </g>
 <g fill="#56648c" filter="url(#bl2)"><circle cx="71.7" cy="81.7" r="0.62" opacity="0.44"/><circle cx="43.6" cy="96.0" r="0.56" opacity="0.29"/><circle cx="166.5" cy="78.0" r="0.90" opacity="0.39"/><circle cx="121.9" cy="62.4" r="0.78" opacity="0.55"/><circle cx="107.4" cy="91.3" r="0.80" opacity="0.23"/><circle cx="136.8" cy="84.0" r="0.58" opacity="0.21"/><circle cx="150.2" cy="78.2" r="0.83" opacity="0.55"/><circle cx="131.3" cy="100.1" r="0.64" opacity="0.52"/><circle cx="97.6" cy="100.8" r="0.93" opacity="0.24"/><circle cx="162.7" cy="76.4" r="0.78" opacity="0.32"/><circle cx="85.9" cy="83.7" r="0.75" opacity="0.56"/><circle cx="127.2" cy="100.5" r="0.91" opacity="0.60"/><circle cx="125.9" cy="63.0" r="0.92" opacity="0.59"/><circle cx="155.1" cy="82.9" r="0.83" opacity="0.28"/><circle cx="146.0" cy="83.1" r="0.57" opacity="0.23"/><circle cx="148.7" cy="103.5" r="0.45" opacity="0.52"/><circle cx="78.7" cy="92.7" r="0.92" opacity="0.22"/><circle cx="131.8" cy="71.2" r="0.93" opacity="0.59"/><circle cx="105.2" cy="103.9" r="0.59" opacity="0.23"/><circle cx="66.7" cy="75.0" r="0.77" opacity="0.26"/><circle cx="47.3" cy="97.5" r="0.59" opacity="0.58"/><circle cx="154.1" cy="73.5" r="0.68" opacity="0.41"/><circle cx="122.5" cy="84.2" r="0.74" opacity="0.45"/><circle cx="159.6" cy="79.8" r="0.66" opacity="0.49"/><circle cx="71.7" cy="69.8" r="0.99" opacity="0.41"/><circle cx="93.9" cy="83.4" r="0.41" opacity="0.45"/><circle cx="120.4" cy="77.8" r="0.81" opacity="0.34"/><circle cx="130.4" cy="91.2" r="0.41" opacity="0.22"/><circle cx="126.5" cy="102.2" r="0.55" opacity="0.38"/><circle cx="116.1" cy="70.7" r="0.62" opacity="0.33"/><circle cx="88.1" cy="84.2" r="0.58" opacity="0.35"/><circle cx="138.5" cy="56.3" r="0.74" opacity="0.49"/><circle cx="80.8" cy="65.9" r="0.88" opacity="0.30"/><circle cx="65.4" cy="76.3" r="0.82" opacity="0.24"/><circle cx="82.2" cy="71.4" r="0.90" opacity="0.38"/><circle cx="148.9" cy="63.3" r="0.60" opacity="0.46"/><circle cx="152.6" cy="77.1" r="0.54" opacity="0.25"/><circle cx="142.8" cy="96.1" r="0.51" opacity="0.31"/><circle cx="142.9" cy="86.5" r="0.88" opacity="0.34"/><circle cx="141.2" cy="68.3" r="0.61" opacity="0.37"/><circle cx="157.1" cy="62.6" r="0.40" opacity="0.58"/><circle cx="152.0" cy="103.4" r="0.66" opacity="0.58"/><circle cx="157.9" cy="65.9" r="0.85" opacity="0.53"/><circle cx="124.9" cy="80.4" r="0.57" opacity="0.34"/><circle cx="115.6" cy="69.1" r="0.89" opacity="0.22"/><circle cx="155.0" cy="89.0" r="0.95" opacity="0.56"/><circle cx="154.5" cy="83.3" r="0.41" opacity="0.50"/><circle cx="124.9" cy="80.7" r="0.65" opacity="0.58"/><circle cx="118.5" cy="71.7" r="0.55" opacity="0.54"/><circle cx="101.6" cy="93.3" r="0.61" opacity="0.28"/><circle cx="108.8" cy="95.0" r="0.50" opacity="0.52"/><circle cx="157.2" cy="94.5" r="0.89" opacity="0.20"/><circle cx="120.6" cy="97.3" r="0.43" opacity="0.31"/><circle cx="75.6" cy="80.8" r="0.65" opacity="0.39"/><circle cx="163.8" cy="96.9" r="0.45" opacity="0.40"/><circle cx="81.5" cy="70.4" r="0.61" opacity="0.46"/><circle cx="115.3" cy="72.7" r="0.51" opacity="0.33"/><circle cx="57.5" cy="82.2" r="0.83" opacity="0.35"/><circle cx="88.7" cy="84.6" r="0.87" opacity="0.35"/><circle cx="142.1" cy="85.5" r="0.66" opacity="0.35"/><circle cx="104.0" cy="89.4" r="0.65" opacity="0.48"/><circle cx="109.0" cy="89.1" r="0.44" opacity="0.37"/><circle cx="95.2" cy="98.1" r="0.96" opacity="0.35"/><circle cx="154.2" cy="93.8" r="0.56" opacity="0.39"/><circle cx="57.4" cy="94.8" r="0.80" opacity="0.55"/><circle cx="141.1" cy="87.7" r="0.84" opacity="0.43"/><circle cx="54.9" cy="83.8" r="0.40" opacity="0.26"/><circle cx="138.8" cy="57.2" r="0.46" opacity="0.24"/><circle cx="152.1" cy="63.8" r="0.41" opacity="0.54"/><circle cx="57.2" cy="96.4" r="0.80" opacity="0.53"/><circle cx="161.1" cy="83.4" r="0.88" opacity="0.21"/><circle cx="137.9" cy="80.1" r="0.83" opacity="0.24"/><circle cx="135.6" cy="100.8" r="0.44" opacity="0.33"/><circle cx="112.5" cy="95.6" r="0.55" opacity="0.27"/><circle cx="73.2" cy="85.2" r="0.85" opacity="0.36"/><circle cx="87.9" cy="74.4" r="0.61" opacity="0.37"/><circle cx="163.6" cy="75.2" r="0.85" opacity="0.26"/><circle cx="128.4" cy="92.0" r="0.80" opacity="0.41"/><circle cx="102.5" cy="86.5" r="0.94" opacity="0.26"/><circle cx="54.0" cy="91.7" r="0.95" opacity="0.41"/><circle cx="97.4" cy="90.2" r="0.51" opacity="0.31"/><circle cx="66.9" cy="83.7" r="0.59" opacity="0.29"/><circle cx="128.4" cy="101.7" r="0.58" opacity="0.48"/><circle cx="93.7" cy="96.8" r="0.75" opacity="0.31"/><circle cx="63.5" cy="72.7" r="0.59" opacity="0.51"/><circle cx="60.0" cy="103.6" r="0.69" opacity="0.44"/><circle cx="100.5" cy="95.9" r="0.89" opacity="0.42"/><circle cx="102.2" cy="90.3" r="0.91" opacity="0.36"/><circle cx="133.7" cy="102.1" r="0.68" opacity="0.29"/><circle cx="71.3" cy="90.2" r="0.81" opacity="0.58"/><circle cx="148.7" cy="66.9" r="0.51" opacity="0.30"/><circle cx="65.4" cy="89.5" r="0.92" opacity="0.56"/><circle cx="73.9" cy="97.4" r="0.59" opacity="0.37"/><circle cx="133.1" cy="59.2" r="0.46" opacity="0.53"/><circle cx="78.5" cy="72.5" r="0.75" opacity="0.47"/><circle cx="68.3" cy="83.7" r="0.97" opacity="0.36"/><circle cx="76.3" cy="87.6" r="0.47" opacity="0.55"/><circle cx="159.7" cy="73.3" r="0.86" opacity="0.50"/><circle cx="78.9" cy="88.1" r="0.79" opacity="0.52"/><circle cx="75.2" cy="92.0" r="0.98" opacity="0.47"/><circle cx="131.8" cy="88.2" r="0.74" opacity="0.27"/><circle cx="122.7" cy="85.9" r="0.51" opacity="0.56"/><circle cx="123.9" cy="61.0" r="0.96" opacity="0.26"/><circle cx="83.4" cy="90.3" r="0.76" opacity="0.42"/><circle cx="122.9" cy="77.4" r="0.59" opacity="0.27"/><circle cx="50.6" cy="90.1" r="0.85" opacity="0.42"/><circle cx="134.5" cy="72.6" r="0.56" opacity="0.35"/><circle cx="138.1" cy="72.4" r="0.60" opacity="0.36"/><circle cx="109.7" cy="92.8" r="0.61" opacity="0.54"/><circle cx="139.4" cy="90.6" r="0.51" opacity="0.28"/><circle cx="94.1" cy="91.4" r="0.89" opacity="0.50"/><circle cx="108.0" cy="82.9" r="0.52" opacity="0.30"/><circle cx="139.7" cy="56.5" r="0.88" opacity="0.56"/><circle cx="160.7" cy="73.8" r="0.73" opacity="0.43"/><circle cx="121.2" cy="102.9" r="0.81" opacity="0.32"/><circle cx="149.5" cy="78.7" r="0.76" opacity="0.49"/><circle cx="42.3" cy="92.8" r="0.80" opacity="0.40"/><circle cx="107.5" cy="77.6" r="0.52" opacity="0.41"/><circle cx="122.7" cy="76.8" r="0.74" opacity="0.58"/><circle cx="141.0" cy="85.5" r="0.43" opacity="0.34"/><circle cx="109.4" cy="100.6" r="0.59" opacity="0.55"/><circle cx="128.8" cy="61.6" r="0.91" opacity="0.44"/><circle cx="157.9" cy="90.1" r="0.84" opacity="0.34"/><circle cx="142.8" cy="100.7" r="0.92" opacity="0.37"/><circle cx="136.6" cy="78.8" r="0.47" opacity="0.22"/><circle cx="62.1" cy="79.4" r="0.82" opacity="0.41"/><circle cx="94.8" cy="86.8" r="0.58" opacity="0.39"/><circle cx="136.6" cy="74.7" r="0.51" opacity="0.56"/><circle cx="132.0" cy="73.0" r="0.62" opacity="0.41"/><circle cx="116.6" cy="66.0" r="0.40" opacity="0.28"/><circle cx="139.9" cy="62.0" r="0.68" opacity="0.28"/><circle cx="63.0" cy="79.0" r="0.44" opacity="0.21"/><circle cx="129.9" cy="57.5" r="0.64" opacity="0.36"/><circle cx="45.3" cy="102.3" r="0.53" opacity="0.24"/><circle cx="119.8" cy="72.0" r="0.47" opacity="0.22"/><circle cx="133.0" cy="68.5" r="0.87" opacity="0.39"/><circle cx="158.6" cy="69.7" r="0.55" opacity="0.31"/><circle cx="143.8" cy="85.8" r="0.61" opacity="0.24"/><circle cx="127.3" cy="102.5" r="0.76" opacity="0.20"/><circle cx="48.7" cy="87.1" r="0.94" opacity="0.28"/><circle cx="163.7" cy="78.4" r="0.88" opacity="0.57"/><circle cx="80.1" cy="84.7" r="0.97" opacity="0.24"/><circle cx="78.7" cy="96.6" r="0.47" opacity="0.36"/><circle cx="83.8" cy="88.3" r="0.96" opacity="0.27"/><circle cx="134.5" cy="91.0" r="0.90" opacity="0.42"/><circle cx="157.4" cy="72.8" r="0.65" opacity="0.29"/><circle cx="139.4" cy="78.6" r="0.56" opacity="0.27"/><circle cx="132.1" cy="84.7" r="0.83" opacity="0.35"/><circle cx="130.8" cy="56.1" r="0.68" opacity="0.50"/><circle cx="126.7" cy="59.8" r="0.54" opacity="0.54"/><circle cx="122.3" cy="98.0" r="0.92" opacity="0.38"/><circle cx="154.1" cy="90.9" r="0.60" opacity="0.35"/><circle cx="52.1" cy="86.8" r="0.54" opacity="0.22"/><circle cx="61.1" cy="86.6" r="0.75" opacity="0.20"/><circle cx="70.7" cy="102.4" r="0.53" opacity="0.42"/><circle cx="94.5" cy="93.3" r="0.76" opacity="0.52"/><circle cx="145.2" cy="60.5" r="0.41" opacity="0.59"/><circle cx="66.9" cy="98.8" r="0.45" opacity="0.39"/><circle cx="69.8" cy="95.6" r="0.77" opacity="0.46"/><circle cx="137.2" cy="97.7" r="0.61" opacity="0.44"/><circle cx="146.4" cy="84.1" r="0.89" opacity="0.28"/><circle cx="109.4" cy="77.7" r="0.84" opacity="0.23"/><circle cx="85.3" cy="78.7" r="0.44" opacity="0.42"/><circle cx="133.9" cy="75.7" r="0.79" opacity="0.44"/><circle cx="68.8" cy="72.2" r="1.00" opacity="0.33"/><circle cx="158.4" cy="90.6" r="0.92" opacity="0.59"/><circle cx="118.5" cy="100.6" r="0.72" opacity="0.37"/><circle cx="160.5" cy="99.3" r="0.97" opacity="0.39"/><circle cx="138.7" cy="74.9" r="1.00" opacity="0.57"/><circle cx="78.5" cy="100.8" r="0.51" opacity="0.24"/><circle cx="132.3" cy="69.4" r="0.71" opacity="0.46"/><circle cx="47.1" cy="91.5" r="0.57" opacity="0.37"/><circle cx="85.1" cy="91.4" r="0.85" opacity="0.31"/><circle cx="61.2" cy="92.4" r="0.82" opacity="0.59"/><circle cx="164.5" cy="97.9" r="0.62" opacity="0.26"/><circle cx="81.0" cy="77.7" r="0.72" opacity="0.42"/><circle cx="87.0" cy="96.8" r="0.57" opacity="0.39"/><circle cx="152.9" cy="94.5" r="0.58" opacity="0.30"/><circle cx="58.4" cy="81.0" r="0.72" opacity="0.27"/><circle cx="138.2" cy="77.8" r="0.99" opacity="0.51"/><circle cx="72.9" cy="94.3" r="0.65" opacity="0.30"/><circle cx="120.4" cy="88.1" r="0.95" opacity="0.52"/><circle cx="136.8" cy="93.7" r="0.71" opacity="0.53"/><circle cx="122.4" cy="99.0" r="0.94" opacity="0.39"/><circle cx="125.2" cy="100.5" r="0.89" opacity="0.44"/><circle cx="93.8" cy="80.4" r="0.50" opacity="0.27"/><circle cx="127.5" cy="103.6" r="0.73" opacity="0.36"/><circle cx="86.0" cy="77.3" r="0.88" opacity="0.38"/><circle cx="161.9" cy="62.6" r="0.59" opacity="0.41"/><circle cx="93.5" cy="96.7" r="0.90" opacity="0.57"/><circle cx="113.8" cy="81.9" r="0.69" opacity="0.31"/><circle cx="130.7" cy="99.7" r="0.46" opacity="0.47"/><circle cx="88.4" cy="80.2" r="0.94" opacity="0.58"/><circle cx="122.4" cy="64.6" r="0.95" opacity="0.27"/><circle cx="89.9" cy="95.6" r="0.59" opacity="0.31"/><circle cx="160.7" cy="101.2" r="0.59" opacity="0.36"/><circle cx="77.2" cy="61.4" r="0.55" opacity="0.59"/><circle cx="107.8" cy="91.4" r="0.90" opacity="0.45"/><circle cx="77.3" cy="102.1" r="0.44" opacity="0.31"/><circle cx="71.5" cy="101.9" r="0.49" opacity="0.56"/><circle cx="64.2" cy="103.6" r="0.80" opacity="0.46"/><circle cx="136.9" cy="63.6" r="0.51" opacity="0.53"/><circle cx="162.1" cy="81.2" r="0.63" opacity="0.24"/><circle cx="90.7" cy="103.4" r="0.57" opacity="0.25"/><circle cx="86.1" cy="99.8" r="0.45" opacity="0.28"/><circle cx="159.4" cy="103.8" r="0.99" opacity="0.30"/><circle cx="86.3" cy="101.6" r="0.69" opacity="0.48"/><circle cx="81.2" cy="56.0" r="0.61" opacity="0.50"/><circle cx="139.7" cy="82.9" r="0.68" opacity="0.42"/><circle cx="146.1" cy="64.8" r="0.76" opacity="0.57"/><circle cx="148.0" cy="63.8" r="0.98" opacity="0.54"/><circle cx="164.3" cy="75.1" r="0.92" opacity="0.25"/><circle cx="43.7" cy="97.6" r="0.88" opacity="0.60"/><circle cx="127.7" cy="80.7" r="0.86" opacity="0.24"/><circle cx="109.5" cy="76.6" r="0.49" opacity="0.44"/><circle cx="82.4" cy="79.8" r="0.62" opacity="0.33"/><circle cx="86.8" cy="84.5" r="0.99" opacity="0.57"/><circle cx="149.8" cy="95.9" r="0.57" opacity="0.59"/><circle cx="75.7" cy="61.0" r="0.70" opacity="0.49"/><circle cx="84.6" cy="86.6" r="0.57" opacity="0.59"/></g>
 </g>
</svg>
<div class="a" style="left:666px;top:304.8px;width:60.7px;height:9.5px;background:rgba(32,32,32,0.78)"></div>
<svg style="left:668px;top:306.5px" width="6" height="6" viewBox="0 0 6 6"><rect x="0.2" y="4" width="1" height="2" fill="#ddd"/><rect x="1.7" y="2.8" width="1" height="3.2" fill="#ddd"/><rect x="3.2" y="1.5" width="1" height="4.5" fill="#ddd"/><rect x="4.7" y="0.2" width="1" height="5.8" fill="#ddd"/></svg>
<div class="t sx" style="left:675.5px;top:306.8px;font-size:5.8px;color:#d6d6d6;transform:scaleX(1.0)">Амангуль Оракова</div>
<!-- bottom toolbar -->
<svg style="left:20.5px;top:501.3px" width="9" height="12" viewBox="0 0 9 12"><rect x="2.3" y="0.3" width="4.4" height="7.4" rx="2.2" fill="#bdbdbd"/><path d="M2.3 5.2 H6.7 V5.5 A2.2 2.2 0 0 1 2.3 5.5 Z" fill="#2ccf5a"/><path d="M0.8 5 A3.7 3.7 0 0 0 8.2 5" stroke="#bdbdbd" stroke-width="0.8" fill="none"/><path d="M4.5 8.8 V11" stroke="#bdbdbd" stroke-width="0.8"/></svg>
<svg style="left:42px;top:506.5px" width="4" height="3" viewBox="0 0 4 3"><path d="M0.4 2.4 L2 0.7 L3.6 2.4" stroke="#cfcfcf" stroke-width="0.8" fill="none"/></svg>
<div class="tb sx" style="left:5.1px;top:516px;transform:scaleX(0.946)">Выключить звук</div>
<svg style="left:69px;top:503.8px" width="12" height="7.5" viewBox="0 0 12 7.5"><rect x="0.2" y="0.3" width="7.8" height="7" rx="1.4" fill="#c4c4c4"/><path d="M8.6 2.6 L11.6 0.7 V6.8 L8.6 4.9 Z" fill="#c4c4c4"/></svg>
<svg style="left:93px;top:506.5px" width="4" height="3" viewBox="0 0 4 3"><path d="M0.4 2.4 L2 0.7 L3.6 2.4" stroke="#cfcfcf" stroke-width="0.8" fill="none"/></svg>
<div class="tb sx" style="left:51.6px;top:516px;transform:scaleX(0.913)">Остановить видео</div>

<svg style="left:304.5px;top:503px" width="10" height="10" viewBox="0 0 10 10"><path d="M5 0.3 L9.4 2 V5 C9.4 7.4 7.4 9 5 9.8 C2.6 9 0.6 7.4 0.6 5 V2 Z" fill="#c9c9c9"/><path d="M5 0.3 V9.8 M0.6 5 H9.4" stroke="#1a1a1a" stroke-width="0.7"/></svg>
<div class="tb sx" style="left:292.8px;top:516px;transform:scaleX(0.909)">Безопасность</div>
<svg style="left:351.3px;top:503px" width="13" height="9.5" viewBox="0 0 13 9.5"><circle cx="8.6" cy="2.6" r="2.2" fill="#b5b5b5"/><path d="M4.6 9.3 C4.8 6.6 6.4 5.3 8.6 5.3 C10.8 5.3 12.4 6.6 12.6 9.3 Z" fill="#b5b5b5"/><circle cx="4.3" cy="3" r="2.5" fill="#d0d0d0" stroke="#1a1a1a" stroke-width="0.5"/><path d="M0.2 9.5 C0.4 6.6 2 5.6 4.3 5.6 C6.6 5.6 8.2 6.6 8.4 9.5 Z" fill="#d0d0d0" stroke="#1a1a1a" stroke-width="0.5"/></svg>
<div class="tb" style="left:364.6px;top:504px;font-size:5.6px;color:#cfcfcf">19</div>
<svg style="left:378.5px;top:506.5px" width="4" height="3" viewBox="0 0 4 3"><path d="M0.4 2.4 L2 0.7 L3.6 2.4" stroke="#cfcfcf" stroke-width="0.8" fill="none"/></svg>
<div class="tb sx" style="left:344.4px;top:516px;transform:scaleX(0.954)">Участники</div>
<svg style="left:397px;top:504.5px" width="11" height="9" viewBox="0 0 11 9"><path d="M1.5 0.3 H9.5 A1.2 1.2 0 0 1 10.7 1.5 V5.8 A1.2 1.2 0 0 1 9.5 7 H4 L1.5 8.8 V7 A1.2 1.2 0 0 1 0.3 5.8 V1.5 A1.2 1.2 0 0 1 1.5 0.3 Z" fill="#c9c9c9"/></svg>
<div class="a" style="left:404.5px;top:498.6px;width:9.5px;height:9px;border-radius:4.5px;background:#e02b2b"></div>
<div class="tb" style="left:406.4px;top:500.6px;font-size:5.2px;color:#fff;font-weight:bold">13</div>
<div class="tb sx" style="left:398.5px;top:516px;transform:scaleX(0.96)">Чат</div>
<div class="a" style="left:445.2px;top:503.2px;width:10.8px;height:9px;border-radius:1.6px;background:#2fd15d"></div>
<svg style="left:448px;top:505px" width="5" height="5.6" viewBox="0 0 5 5.6"><path d="M2.5 0.2 L4.8 2.6 H3.3 V5.4 H1.7 V2.6 H0.2 Z" fill="#0e2a14"/></svg>
<svg style="left:474px;top:506.5px" width="4" height="3" viewBox="0 0 4 3"><path d="M0.4 2.4 L2 0.7 L3.6 2.4" stroke="#cfcfcf" stroke-width="0.8" fill="none"/></svg>
<div class="tb sx" style="left:423.6px;top:516px;color:#37d865;transform:scaleX(0.912)">Демонстрация экрана</div>
<svg style="left:493px;top:503px" width="10" height="10" viewBox="0 0 10 10"><circle cx="5" cy="5" r="4.4" fill="none" stroke="#c9c9c9" stroke-width="1"/><circle cx="5" cy="5" r="2.9" fill="#9e9e9e"/></svg>
<div class="tb sx" style="left:489.6px;top:516px;transform:scaleX(0.89)">Запись</div>
<svg style="left:536px;top:502.5px" width="10" height="10" viewBox="0 0 10 10"><rect x="0" y="0" width="4.5" height="4.5" rx="0.8" fill="#c9c9c9"/><rect x="5.3" y="0" width="4.5" height="4.5" rx="0.8" fill="#c9c9c9"/><rect x="0" y="5.3" width="4.5" height="4.5" rx="0.8" fill="#c9c9c9"/><rect x="5.3" y="5.3" width="4.5" height="4.5" rx="0.8" fill="#c9c9c9"/></svg>
<div class="tb sx" style="left:518.4px;top:516px;transform:scaleX(0.9)">Сессионные залы</div>
<svg style="left:578px;top:502.5px" width="11" height="10.5" viewBox="0 0 11 10.5"><circle cx="4.8" cy="5.8" r="4.4" fill="#c9c9c9"/><circle cx="4.8" cy="5.8" r="2.6" fill="#7a7a7a"/><path d="M3.3 6.5 C4 7.5 5.6 7.5 6.3 6.5" stroke="#ddd" stroke-width="0.5" fill="none"/><path d="M9 0.3 V3.5 M7.4 1.9 H10.6" stroke="#d0d0d0" stroke-width="0.8"/></svg>
<div class="tb sx" style="left:572.5px;top:516px;transform:scaleX(0.91)">Реакции</div>
<div class="a" style="left:802px;top:505.5px;width:27px;height:13.5px;border-radius:2.5px;background:#cf2e2e"></div>
<div class="tb sx" style="left:806.5px;top:509.2px;font-size:6px;color:#fff;font-weight:bold;transform:scaleX(0.86)">Выйти</div>
<div class="a" style="left:0;top:523.8px;width:833px;height:1.2px;background:#262626"></div>
</body></html>
